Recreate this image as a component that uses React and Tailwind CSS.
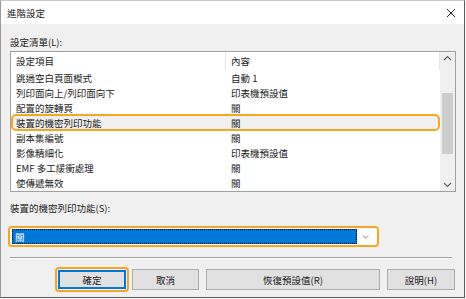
import React from 'react';

const font = { fontFamily: '"Noto Sans CJK TC", "Noto Sans", sans-serif' };

const rows = [
	['跳過空白頁面模式', '自動 1'],
	['列印面向上/列印面向下', '印表機預設值'],
	['配置的旋轉頁', '關'],
	['裝置的機密列印功能', '關'],
	['副本集編號', '關'],
	['影像精細化', '印表機預設值'],
	['EMF 多工緩衝處理', '關'],
	['使傳遞無效', '關'],
];

function Chevron({ up, small }) {
	const w = small ? 7 : 9;
	return (
		<svg width={w} height="6" viewBox="0 0 9 6" fill="none">
			<path d={up ? 'M1 5 L4.5 1.5 L8 5' : 'M1 1 L4.5 4.5 L8 1'} stroke={small ? '#707070' : '#606060'} strokeWidth="1.1" />
		</svg>
	);
}

function Btn({ children, w, primary }) {
	if (primary) {
		return (
			<div className={`h-[25px] ${w} rounded-[4px] border-2 border-[#f5a623] p-[1px] -my-[3px] -mx-[3px]`}>
				<div className="h-full w-full border-2 border-[#0078d7] bg-[#e1e1e1] flex items-center justify-center text-[#1a1a1a]">
					{children}
				</div>
			</div>
		);
	}
	return (
		<div className={`h-[21px] ${w} border border-[#adadad] bg-[#e1e1e1] flex items-center justify-center text-[#1a1a1a]`}>
			{children}
		</div>
	);
}

export default function App() {
	return (
		<div className="w-[466px] h-[299px] bg-white text-[9.5px] leading-[12px] text-[#1a1a1a]" style={font}>
			<div className="w-[465px] h-[298px] border border-l-[#9a9a9a] border-t-[#c8c8c8] border-r-[#5a5a5a] border-b-[#5a5a5a] flex flex-col">
				<div className="h-[23px] bg-white flex items-center justify-between pl-[6px] pr-[8px]">
					<span>進階設定</span>
					<svg width="10" height="10" viewBox="0 0 10 10">
						<path d="M1 1 L9 9 M9 1 L1 9" stroke="#333" strokeWidth="1" />
					</svg>
				</div>

				<div className="flex-1 bg-[#f0f0f0] pl-[9px] pr-[8px] flex flex-col">
					<div className="mt-[12px] h-[12px]">設定清單(L):</div>
					<div className="mt-[3px] w-[446px] h-[141px] border border-[#a0a0a0] bg-white flex">
						<div className="flex-1 flex flex-col">
							<div className="h-[18px] flex items-center">
								<div className="w-[215px] h-full pl-[5px] flex items-center border-r border-[#e5e5e5]">設定項目</div>
								<div className="flex-1 h-full pl-[5px] flex items-center border-r border-[#e5e5e5]">內容</div>
							</div>
							{rows.map(([k, v], i) => (
								i === 3 ? (
									<div key={k} className="flex items-center rounded-[5px] border-2 border-[#f5a623] bg-[#f0f0f0] -my-[1px] h-[17px]">
										<div className="w-[213px] pl-[3px]">{k}</div>
										<div className="flex-1 pl-[5px]">{v}</div>
									</div>
								) : (
									<div key={k} className="h-[15px] flex items-center">
										<div className="w-[215px] pl-[5px]">{k}</div>
										<div className="flex-1 pl-[5px]">{v}</div>
									</div>
								)
							))}
						</div>
						<div className="w-[15px] bg-[#f0f0f0] flex flex-col items-center">
							<div className="h-[17px] flex items-center justify-center"><Chevron up /></div>
							<div className="flex-1 w-full px-[2px] pt-[28px] pb-[25px]">
								<div className="h-[61px] bg-[#cdcdcd]"></div>
							</div>
							<div className="h-[17px] flex items-center justify-center"><Chevron /></div>
						</div>
					</div>

					<div className="mt-[10px] h-[12px]">裝置的機密列印功能(S):</div>
					<div className="mt-[12px] -ml-[2px] w-[371px] h-[21px] rounded-[4px] border-2 border-[#f5a623] bg-white flex items-center pl-[2px] pr-[4px]">
						<div className="flex-1 h-[15px] bg-[#0078d7] border border-dotted border-black text-white flex items-center pl-[2px]">關</div>
						<div className="w-[16px] flex justify-center"><Chevron small /></div>
					</div>

					<div className="mt-[10px] w-[442px] h-[2px] border-t border-[#a0a0a0] border-b border-b-white"></div>

					<div className="mt-[10px] flex items-center">
						<div className="ml-[48px]"><Btn w="w-[74px]" primary>確定</Btn></div>
						<div className="ml-[6px]"><Btn w="w-[67px]">取消</Btn></div>
						<div className="ml-[7px]"><Btn w="w-[174px]">恢復預設值(R)</Btn></div>
						<div className="ml-[7px]"><Btn w="w-[68px]">說明(H)</Btn></div>
					</div>
				</div>
			</div>
		</div>
	);
}
